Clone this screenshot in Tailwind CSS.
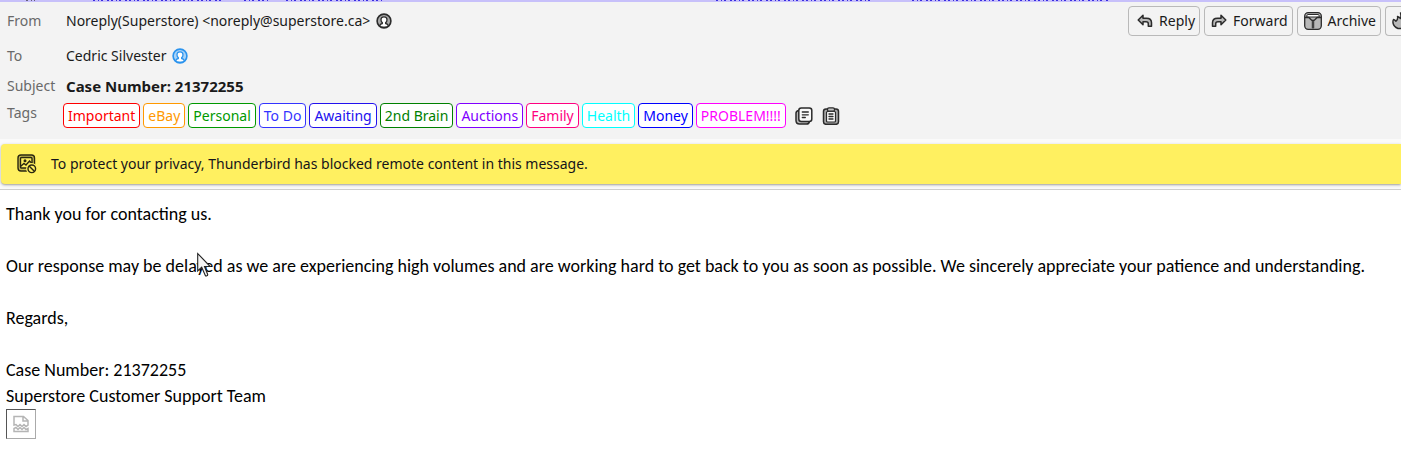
<!DOCTYPE html>
<html lang="en">

<head>
    <meta charset="UTF-8">
    <meta name="viewport" content="width=device-width, initial-scale=1.0">
    <title>Case Number: 21372255</title>
    <script src="https://cdn.jsdelivr.net/npm/@tailwindcss/browser@4"></script>
</head>

<body class="relative overflow-x-hidden bg-white font-['Noto_Sans',sans-serif] text-sm text-[#1a1a1a]">
    <!-- bottom edge of the selected row in the message list -->
    <div class="h-0.5 bg-[#c7c0fa]">
        <svg class="block h-0.5 w-full" aria-hidden="true">
            <g stroke="#3a2ee0" stroke-width="1" stroke-dasharray="2 3 1 2 2 4 2 2">
                <path d="M26 .5H35" stroke="#66607a" />
                <path d="M93 .5H224M244 .5H270M286 .5H384" />
                <path d="M716 .5H872M912 .5H1110" />
            </g>
        </svg>
    </div>
    <header class="flex justify-between bg-[#f3f3f3] pb-[11px]">
        <div class="grid shrink-0 grid-cols-[59px_auto] pl-[7px] leading-5">
            <span class="pt-[9px] text-[#696969]">From</span>
            <div class="flex items-center gap-1.5 pt-[9px]">
                <span>Noreply(Superstore) &lt;noreply@superstore.ca&gt;</span>
                <svg class="size-4" viewBox="0 0 16 16" fill="none" stroke="#2b2b2b" stroke-width="1.6">
                    <circle cx="8" cy="8" r="6.900" fill="#aaa" />
                    <path d="M4 13v-.8c0-1 1-1.400 2.300-1.700v-.9C5.300 8.900 5 7.800 5 6.700 5 4.900 6.200 3.800 8 3.800s3 1.100 3 2.900c0 1.100-.3 2.200-1.300 2.900v.9c1.300.3 2.300.7 2.300 1.700v.8" fill="#fff" stroke-width="1.300" />
                </svg>
            </div>
            <span class="pt-[15px] text-[#696969]">To</span>
            <div class="flex items-center gap-1.5 pt-[15px]">
                <span>Cedric Silvester</span>
                <svg class="size-4" viewBox="0 0 16 16" fill="none" stroke="#2a93ee" stroke-width="1.600">
                    <circle cx="8" cy="8" r="6.900" fill="#a9d3f7" />
                    <path d="M4 13v-.8c0-1 1-1.400 2.300-1.700v-.9C5.300 8.900 5 7.800 5 6.700 5 4.900 6.200 3.800 8 3.800s3 1.100 3 2.900c0 1.100-.3 2.200-1.300 2.900v.9c1.300.3 2.300.7 2.300 1.700v.8" fill="#fff" stroke-width="1.300" />
                </svg>
            </div>
            <span class="pt-2.5 text-[#696969]">Subject</span>
            <h1 class="pt-2.5 text-[15px] leading-5 font-bold">Case Number: 21372255</h1>
            <span class="pt-[7px] text-[#696969]">Tags</span>
            <div class="-ml-[3px] flex items-center gap-[3px] pt-[7px]">
                <span class="flex h-[25px] items-center rounded border border-[#ff0000] bg-white px-1 text-[#ff0000]">Important</span>
                <span class="flex h-[25px] items-center rounded border border-[#ff9900] bg-white px-1 text-[#ff9900]">eBay</span>
                <span class="flex h-[25px] items-center rounded border border-[#009900] bg-white px-1 text-[#009900]">Personal</span>
                <span class="flex h-[25px] items-center rounded border border-[#3333ff] bg-white px-1 text-[#3333ff]">To Do</span>
                <span class="flex h-[25px] items-center rounded border border-[#2211ee] bg-white px-1 text-[#2211ee]">Awaiting</span>
                <span class="flex h-[25px] items-center rounded border border-[#008000] bg-white px-1 text-[#008000]">2nd Brain</span>
                <span class="flex h-[25px] items-center rounded border border-[#8000ff] bg-white px-1 text-[#8000ff]">Auctions</span>
                <span class="flex h-[25px] items-center rounded border border-[#ff0080] bg-white px-1 text-[#ff0080]">Family</span>
                <span class="flex h-[25px] items-center rounded border border-[#00ffff] bg-white px-1 text-[#00ffff]">Health</span>
                <span class="flex h-[25px] items-center rounded border border-[#0000ff] bg-white px-1 text-[#0000ff]">Money</span>
                <span class="flex h-[25px] items-center rounded border border-[#ff00ff] bg-white px-1 text-[#ff00ff]">PROBLEM!!!!</span>
                <button class="ml-1.5" aria-label="Copy">
                    <svg class="block size-[18px]" viewBox="0 0 18 18" fill="none" stroke="#2b2b2b" stroke-width="1.500" stroke-linecap="round">
                        <path d="M3.500 3.500C1.800 3.800 1 4.700 1 6.300v7.200c0 2.500 1 3.500 3.500 3.500h7c1.600 0 2.500-.7 2.900-2.300" fill="#b4b4b4" />
                        <rect x="3.800" y="1" width="13" height="13.500" rx="2.500" fill="#fafafa" />
                        <path d="M7.300 5h6M7.300 7.800h6M7.300 10.500h3" stroke-width="1.300" />
                    </svg>
                </button>
                <button class="ml-1.5" aria-label="Paste">
                    <svg class="block size-[18px]" viewBox="0 0 18 18" fill="none" stroke="#2b2b2b" stroke-width="1.500" stroke-linecap="round">
                        <rect x="1.500" y="2" width="15" height="15.300" rx="2.500" fill="#aaa" />
                        <rect x="4.500" y="4.500" width="9" height="10.500" rx="1" fill="#fafafa" stroke-width="1.200" />
                        <rect x="5.500" y=".8" width="7" height="3.400" rx="1.500" fill="#c4c4c4" stroke-width="1.300" />
                        <path d="M7 7h4M7 9.500h4M7 12h4" stroke-width="1.300" />
                    </svg>
                </button>
            </div>
        </div>
        <div class="mt-1 flex h-[30px] gap-1 self-start leading-5">
            <button class="flex items-center gap-1.5 rounded border border-[#b9b9b9] px-1 pl-2">
                <svg class="size-4" viewBox="0 0 16 16" fill="#b8b8b8" stroke="#2b2b2b" stroke-width="1.500" stroke-linejoin="round">
                    <path d="M1.200 7 6 2.300v2.900h3.500c3.200 0 5 1.700 5 4.600v3.400h-3.200v-2.400c0-1.400-.7-2.100-2.300-2.100H6v3z" />
                </svg>
                Reply
            </button>
            <button class="flex items-center gap-1.5 rounded border border-[#b9b9b9] px-1 pl-1.5">
                <svg class="size-4" viewBox="0 0 16 16" fill="#b8b8b8" stroke="#2b2b2b" stroke-width="1.500" stroke-linejoin="round">
                    <path d="M14.800 7 10 2.300v2.900H6.500c-3.200 0-5 1.700-5 4.600v3.400h3.200v-2.400c0-1.400.7-2.100 2.300-2.100h3v3z" />
                </svg>
                Forward
            </button>
            <button class="flex items-center gap-1.5 rounded border border-[#b9b9b9] px-1 pl-1.5">
                <svg class="size-[18px]" viewBox="0 0 18 18" fill="none" stroke="#2b2b2b" stroke-width="1.300">
                    <rect x=".7" y=".7" width="16.600" height="16.600" rx="3.500" fill="#b8b8b8" />
                    <path d="M2.800 5V3.800C2.800 3 3.300 2.500 4 2.500h10c.7 0 1.200.5 1.200 1.300V5z" fill="#fff" stroke-width="1" />
                    <path d="M.7 5.500h3.800C6 5.500 6.500 8.500 9 8.500s3-3 4.500-3h3.800M9 8.500v8" />
                    <path d="M9 8.500v8" stroke-width="2.800" stroke-dasharray="1 1" />
                </svg>
                Archive
            </button>
            <button class="w-4 overflow-hidden rounded-l border border-r-0 border-[#b9b9b9] pl-1.5" aria-label="Junk">
                <svg class="size-[18px]" viewBox="0 0 18 18" fill="#b8b8b8" stroke="#2b2b2b" stroke-width="1.400" stroke-linejoin="round">
                    <path d="M6 16.500C3.500 15.500 1.500 13.500 1 11c-.2-1.200 0-2.500.5-3.500 1 .2 1.800.8 2.500 1.800C5.500 8 6 6.500 5.500 4.500 7 5 7.800 5.500 8.300 6.500 9.300 5 9 3 8.500 1c3 1 4.500 3.500 4.500 6l2-1c2 4 1.500 8.500-3 10.500z" />
                </svg>
            </button>
        </div>
    </header>
    <div class="border-b border-[#cfcfcf] bg-[#fafafa] pt-[5px] pb-[5px] pl-px">
        <div class="flex h-10 items-center gap-3.5 rounded-l bg-[#fff060] pl-4 text-[#15141a] shadow-sm shadow-black/30">
            <svg class="size-5" viewBox="0 0 20 20" fill="none" stroke="#2b2810" stroke-width="1.400" stroke-linecap="round">
                <rect x="1" y="1" width="16.500" height="16" rx="3" fill="#c9bd50" />
                <rect x="3.500" y="3.500" width="11.500" height="10.500" rx="1" fill="#fff060" />
                <circle cx="8" cy="6.800" r=".8" />
                <path d="m4 12 3-2.500 2 1.500 3.500-4 2.500 2.500" />
                <circle cx="14.800" cy="14.800" r="5" fill="#fff060" stroke="#fff060" />
                <circle cx="14.800" cy="14.800" r="3.800" fill="#fff060" />
                <path d="m12.300 12.300 5 5" />
            </svg>
            <span>To protect your privacy, Thunderbird has blocked remote content in this message.</span>
        </div>
    </div>
    <main class="px-1.5 pt-[11px] font-[Carlito,Lato,sans-serif] text-lg leading-[26px] text-black">
        <p>Thank you for contacting us.</p>
        <br>
        <p class="whitespace-nowrap">Our response may be delayed as we are experiencing high volumes and are working hard to get back to you as soon as possible. We sincerely appreciate your patience and understanding.</p>
        <br>
        <p>Regards,</p>
        <br>
        <p>Case Number: 21372255</p>
        <p>Superstore Customer Support Team</p>
        <div class="flex size-[30px] items-center justify-center border border-t-[#555] border-r-[#aaa] border-b-[#aaa] border-l-[#555]" role="img" aria-label="Blocked image">
            <svg class="size-[18px]" viewBox="0 0 18 18" fill="none" stroke="#b5b5b5" stroke-width="1.500">
                <path d="M2 10V1.500h9.500l4.500 4V10l-2 1.500-2-2-2 2-2-2-2 2-2-2zM11 1.500v4.500h5" />
                <path d="M2 16.500v-3l2-1 2 2 2-2 2 2 2-2 2 2 2-1v3z" />
            </svg>
        </div>
    </main>
    <!-- mouse pointer -->
    <svg class="absolute top-[252px] left-[197px] h-[26px] w-4" viewBox="0 0 16 26" fill="#f4f4f4" stroke="#222" stroke-width="1.100" aria-hidden="true">
        <path d="M.7 1.500V19l4-3.800 3.500 8c.6 1.500 3 .6 2.400-1L7.500 14.500h5.700z" />
    </svg>
</body>

</html>
